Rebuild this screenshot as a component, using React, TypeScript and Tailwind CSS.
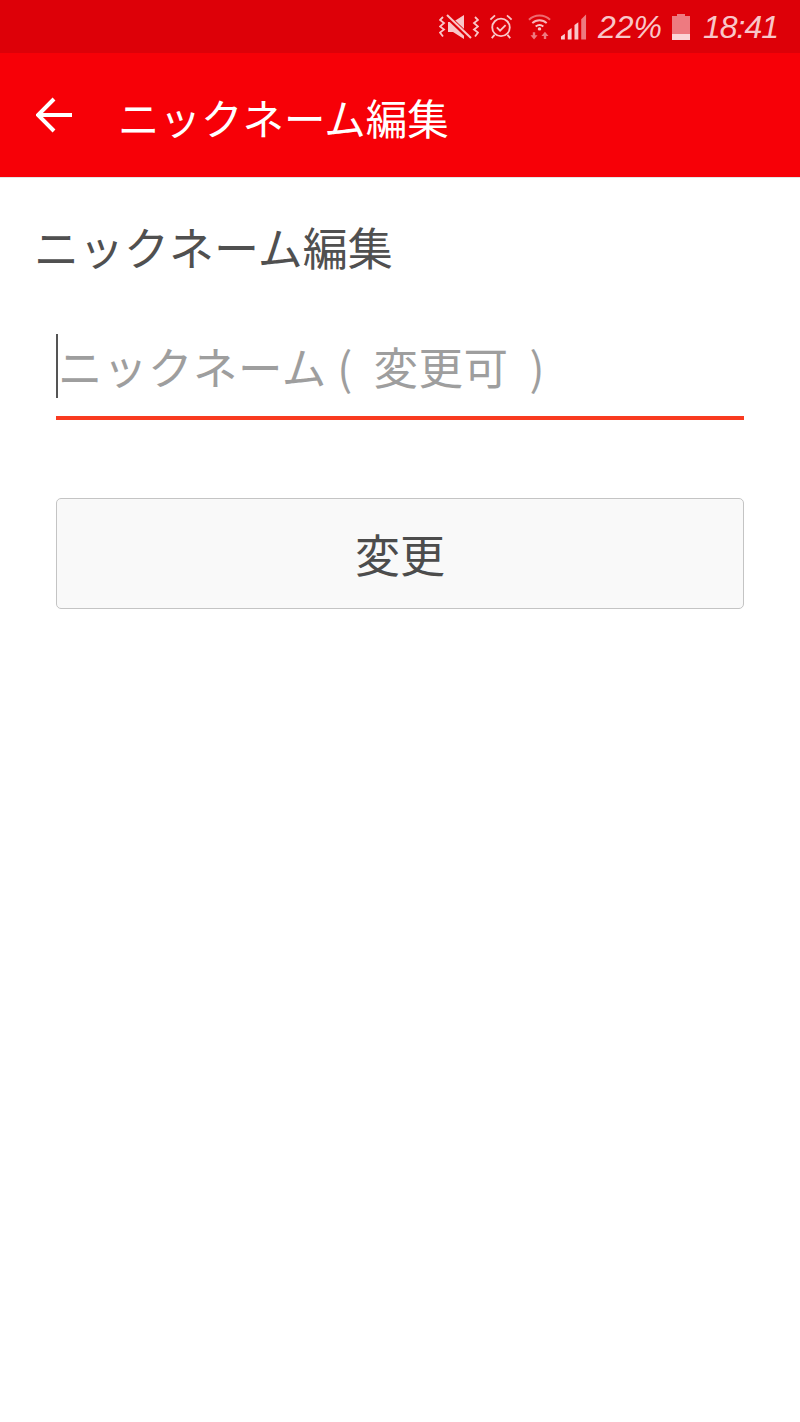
const cjk = { fontFamily: '"Noto Sans CJK JP", "Noto Sans", sans-serif' }

function MuteVibrate() {
  return (
    <svg width="40" height="26" viewBox="0 0 40 26" fill="none" className="shrink-0">
      <path d="M4 3L1 6l4 3-4 3.500 4 3-4 3 3 4M36 3l3 3-4 3 4 3.500-4 3 4 3-3 4" stroke="#f9c6c8" strokeWidth="1.800" />
      <path d="M9 8h5l11-7v24l-11-7H9z" fill="#f9c6c8" />
      <path d="M7 1l25 24" stroke="#dd0008" strokeWidth="5" />
      <path d="M8 1l24 23" stroke="#f9c6c8" strokeWidth="2" />
    </svg>
  )
}

function Alarm() {
  return (
    <svg width="24" height="27" viewBox="0 0 26 28" fill="none" stroke="#f9c6c8" className="shrink-0">
      <circle cx="13" cy="15" r="9.500" strokeWidth="2" />
      <path d="M8.500 15l3.500 3.500 6-6" strokeWidth="2" />
      <path d="M1.500 6.500l5-4.500M24.500 6.500l-5-4.500M6 23l-3 3.500M20 23l3 3.500" strokeWidth="2" />
    </svg>
  )
}

function Wifi() {
  return (
    <svg width="23" height="27" viewBox="0 0 24 28" fill="none" className="shrink-0">
      <path d="M1 7c6-6 16-6 22 0" stroke="#ee6a70" strokeWidth="2" />
      <path d="M4.500 10.500c4-4 11-4 15 0" stroke="#f9b4b8" strokeWidth="2" />
      <path d="M8 14c2.500-2 5.500-2 8 0" stroke="#f9c6c8" strokeWidth="2" />
      <circle cx="12" cy="16.500" r="1.800" fill="#f9c6c8" />
      <path d="M5 20h2.500v3H10l-3.700 4.500L2.600 23H5zM16.500 27v-3H14l3.700-4.500L21.400 24H19v3z" fill="#ee7a80" />
    </svg>
  )
}

function Signal() {
  return (
    <svg width="26" height="27" viewBox="0 0 27 27" className="shrink-0">
      <path d="M0 27v-3l4-3v6z" fill="#f9d0d2" />
      <path d="M7 27v-9l4-3v12z" fill="#f9d0d2" />
      <path d="M14 27V12l4-3v18z" fill="#f9c6c8" />
      <path d="M21 27V6l5-5v26z" fill="#ee7a80" />
    </svg>
  )
}

function Battery() {
  return (
    <div className="flex w-[18px] shrink-0 flex-col items-center">
      <div className="h-[2px] w-[8px] bg-[#ee7a80]" />
      <div className="h-[18px] w-full bg-[#ee7a80]" />
      <div className="h-[6px] w-full bg-[#fbd5d7]" />
    </div>
  )
}

export default function App() {
  return (
    <div className="flex min-h-[1422px] flex-col bg-white" style={cjk}>
      {/* ステータスバー */}
      <div className="flex h-[53px] items-center justify-end bg-[#dd0008] pr-[22px] text-[#f9c6c8]">
        <MuteVibrate />
        <div className="ml-[10px]"><Alarm /></div>
        <div className="ml-[15px]"><Wifi /></div>
        <div className="ml-[10px]"><Signal /></div>
        <span className="ml-[11px] font-['Liberation_Sans'] text-[32px] leading-none italic">22%</span>
        <div className="ml-[10px]"><Battery /></div>
        <span className="ml-[13px] font-['Liberation_Sans'] text-[32px] leading-none tracking-[-1px] italic">18:41</span>
      </div>

      {/* ヘッダー */}
      <header className="flex h-[125px] items-center border-b border-[#e4e4e4] bg-[#f70007] pl-[36px] text-white">
        <svg width="36" height="36" viewBox="0 0 36 36" fill="none" stroke="white" strokeWidth="4" className="shrink-0">
          <path d="M36 18H3M18 2L2 18l16 16" />
        </svg>
        <h1 className="mt-[6px] ml-[46px] text-[41.500px] leading-none">ニックネーム編集</h1>
      </header>

      <main className="flex flex-col px-[36px] pt-[43px]">
        <h2 className="-ml-[2px] text-[45px] leading-[52px] text-[#505050]">ニックネーム編集</h2>

        <div className="relative mx-[20px] mt-[59px] flex h-[88px] items-center border-b-[4px] border-[#f93a20] pb-[18px]">
          <span className="absolute top-[2px] left-0 h-[64px] w-[2px] bg-[#555]" />
          <input
            readOnly
            placeholder={'ニックネーム\u00a0(\u00a0\u00a0変更可\u00a0\u00a0)'}
            className="w-full bg-transparent pl-[2px] text-[44.500px] leading-none tracking-[0.5px] outline-none placeholder:text-[#9e9e9e]"
          />
        </div>

        <button className="mx-[20px] mt-[78px] h-[111px] rounded-[5px] border border-[#c4c4c4] bg-[#f9f9f9] text-[45px] leading-none text-[#4c4c4c]">
          変更
        </button>
      </main>
    </div>
  )
}
